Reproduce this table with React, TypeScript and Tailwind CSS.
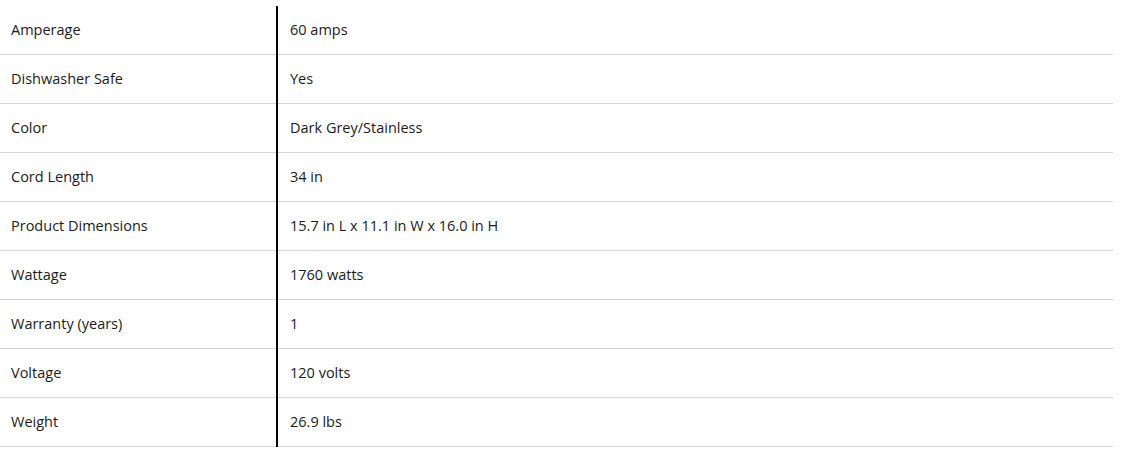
import React from "react"

const specs: [string, string][] = [
  ["Amperage", "60 amps"],
  ["Dishwasher Safe", "Yes"],
  ["Color", "Dark Grey/Stainless"],
  ["Cord Length", "34 in"],
  ["Product Dimensions", "15.7 in L x 11.1 in W x 16.0 in H"],
  ["Wattage", "1760 watts"],
  ["Warranty (years)", "1"],
  ["Voltage", "120 volts"],
  ["Weight", "26.9 lbs"],
]

export default function App() {
  return (
    <div className="w-[1123px] h-[455px] bg-white pt-[6px] font-['Open_Sans',sans-serif] text-[14.5px] text-[#1b1b1b]">
      <div className="w-[1113px] flex">
        <div className="w-[278px] shrink-0 border-r-2 border-black">
          {specs.map(([label]) => (
            <div key={label} className="h-[49px] flex items-center pl-[11px] border-b border-[#d3d6d9]">
              {label}
            </div>
          ))}
        </div>
        <div className="flex-1">
          {specs.map(([label, value]) => (
            <div key={label} className="h-[49px] flex items-center pl-[12px] border-b border-[#d3d6d9]">
              {value}
            </div>
          ))}
        </div>
      </div>
    </div>
  )
}
